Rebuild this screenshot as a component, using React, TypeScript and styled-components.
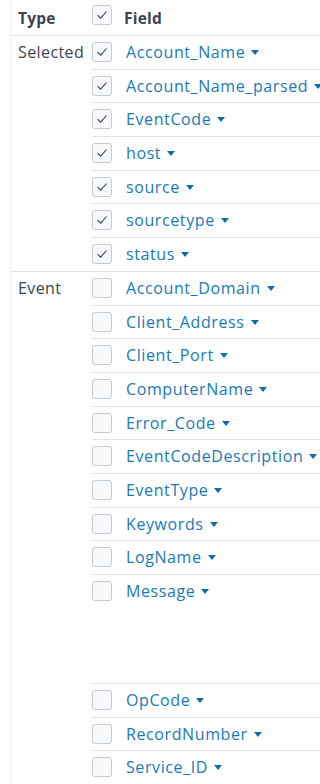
import React from 'react'
import styled, { createGlobalStyle } from 'styled-components'

const GlobalStyle = createGlobalStyle`
  html, body {
    margin: 0;
    padding: 0;
    background: #fff;
    overflow: hidden;
  }
  body {
    font-family: 'Open Sans', 'Liberation Sans', sans-serif;
    color: #3c444d;
  }
`

const Table = styled.div`
  margin-left: 10px;
  border-left: 1px solid #f2f4f5;
  width: 360px;
  min-height: 784px;
`

const HeadRow = styled.div`
  display: flex;
  height: 36px;
  border-bottom: 1px solid #e1e6eb;
  box-sizing: border-box;
  font-weight: 700;
  font-size: 15.5px;
  letter-spacing: 0.2px;
`

const HeadType = styled.div`
  width: 74px;
  padding-left: 7px;
  line-height: 36px;
`

const HeadCheck = styled.div`
  padding-top: 5px;
`

const HeadField = styled.div`
  margin-left: 12px;
  line-height: 36px;
`

const Group = styled.div`
  display: flex;
  border-bottom: 1px solid #e1e6eb;
`

const TypeCell = styled.div`
  width: 74px;
  padding-left: 7px;
  font-size: 16px;
  letter-spacing: 0.4px;
  line-height: 33px;
  flex: none;
`

const Rows = styled.div`
  flex: 1;
`

const Row = styled.div<{ $tall?: boolean }>`
  display: flex;
  align-items: flex-start;
  height: ${(p) => (p.$tall ? 108 : 32.7)}px;
  & + & {
    border-top: 1px solid #e1e6eb;
  }
`

const Box = styled.span`
  width: 20px;
  height: 20px;
  box-sizing: border-box;
  border: 1px solid #c3cbd4;
  border-radius: 3px;
  background: #f7f8fa;
  display: flex;
  align-items: center;
  justify-content: center;
  flex: none;
  margin-top: 6px;
`

const HeadBox = styled(Box)`
  margin-top: 0;
`

const FieldLink = styled.span`
  margin-left: 14px;
  font-size: 16px;
  letter-spacing: 0.6px;
  line-height: 33px;
  color: #1a7ab6;
  white-space: nowrap;
  display: flex;
  align-items: center;
`

const Caret = styled.span`
  display: inline-block;
  margin-left: 6px;
  width: 0;
  height: 0;
  border-left: 4.5px solid transparent;
  border-right: 4.5px solid transparent;
  border-top: 5px solid #0f6ea8;
`

const Check = () => (
  <svg width="12" height="10" viewBox="0 0 12 10">
    <path d="M1.5 5.2 L4.6 8.2 L10.6 1.5" fill="none" stroke="#3c444d" strokeWidth="1.1" />
  </svg>
)

const groups = [
  {
    type: 'Selected',
    checked: true,
    fields: ['Account_Name', 'Account_Name_parsed', 'EventCode', 'host', 'source', 'sourcetype', 'status'],
  },
  {
    type: 'Event',
    checked: false,
    fields: [
      'Account_Domain',
      'Client_Address',
      'Client_Port',
      'ComputerName',
      'Error_Code',
      'EventCodeDescription',
      'EventType',
      'Keywords',
      'LogName',
      'Message',
      'OpCode',
      'RecordNumber',
      'Service_ID',
    ],
  },
]

const App = () => (
  <>
    <GlobalStyle />
    <Table>
      <HeadRow>
        <HeadType>Type</HeadType>
        <HeadCheck>
          <HeadBox>
            <Check />
          </HeadBox>
        </HeadCheck>
        <HeadField>Field</HeadField>
      </HeadRow>
      {groups.map((g) => (
        <Group key={g.type}>
          <TypeCell>{g.type}</TypeCell>
          <Rows>
            {g.fields.map((f) => (
              <Row key={f} $tall={f === 'Message'}>
                <Box>{g.checked && <Check />}</Box>
                <FieldLink>
                  {f}
                  <Caret />
                </FieldLink>
              </Row>
            ))}
          </Rows>
        </Group>
      ))}
    </Table>
  </>
)

export default App
